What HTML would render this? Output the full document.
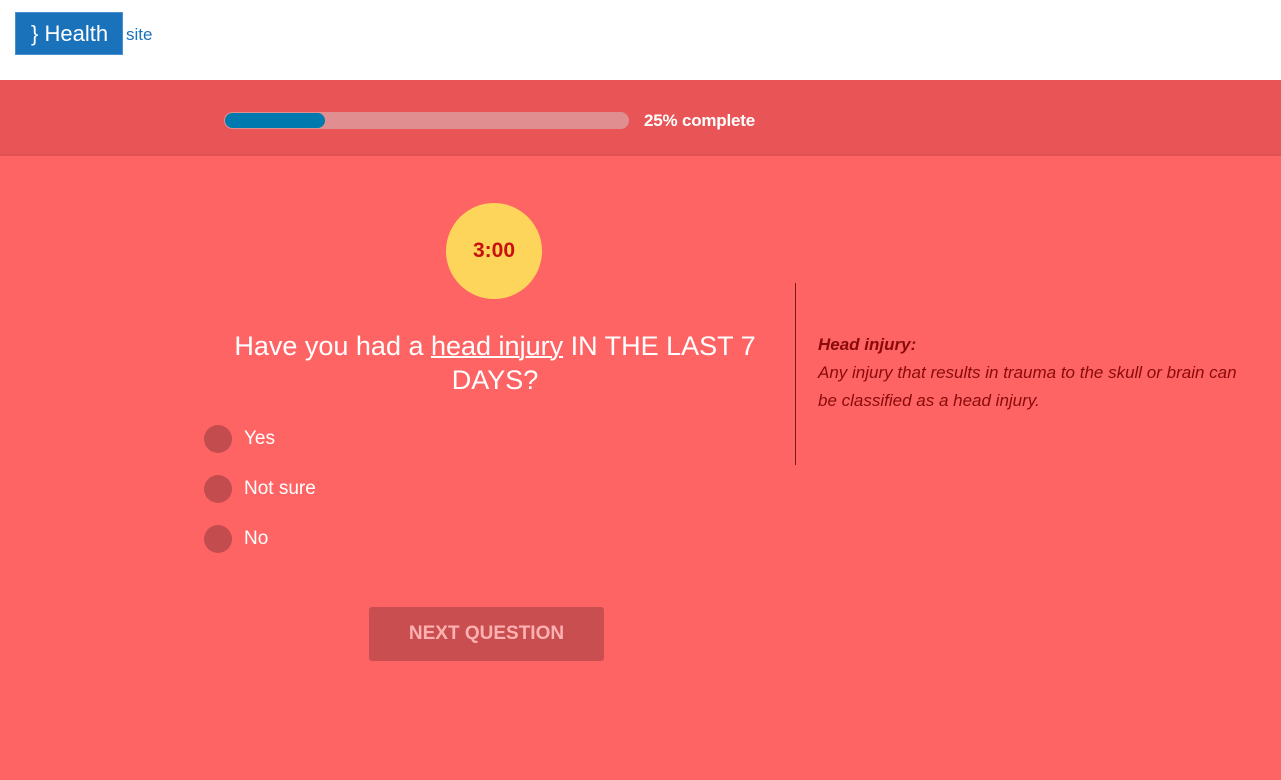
<!DOCTYPE html>
<html><head><meta charset="utf-8"><style>
*{margin:0;padding:0;box-sizing:border-box}
body{width:1281px;height:780px;overflow:hidden;background:#ff6464;font-family:"Liberation Sans",sans-serif;position:relative}
.top{position:absolute;left:0;top:0;width:1281px;height:80px;background:#fff}
.logo{position:absolute;left:15px;top:12px;width:108px;height:43px;background:#1a72bb;border:1px solid #4a90cf;color:#fff;font-size:22px;line-height:41px;padding-left:15px}
.site{position:absolute;left:126px;top:25px;color:#1a72bb;font-size:17px}
.bar{position:absolute;left:0;top:80px;width:1281px;height:76px;background:#e95556;border-bottom:2px solid #e05252}
.track{position:absolute;left:224px;top:112px;width:405px;height:17px;border-radius:9px;background:#e08e8f}
.fill{position:absolute;left:225px;top:113px;width:100px;height:15px;border-radius:8px;background:#0079ae}
.pct{position:absolute;left:644px;top:111px;color:#fff;font-weight:bold;font-size:17px;letter-spacing:-0.2px}
.timer{position:absolute;left:446px;top:203px;width:96px;height:96px;border-radius:50%;background:#fdd55a;color:#c81010;font-weight:bold;font-size:21px;text-align:center;line-height:96px}
.q{position:absolute;left:210px;top:329px;width:570px;text-align:center;color:#fff;font-size:27px;line-height:34px}
.q u{text-decoration-thickness:2px}
.opt{position:absolute;left:204px;color:#fff;font-size:19px;line-height:28px}
.opt i{position:absolute;left:0;top:0;width:28px;height:28px;border-radius:50%;background:#c34c4e}
.opt span{position:absolute;left:40px;top:0;white-space:nowrap}
.btn{position:absolute;left:369px;top:607px;width:235px;height:54px;border-radius:3px;background:#c84e50;color:#ffb0b0;font-weight:bold;font-size:19px;text-align:center;line-height:54px}
.vl{position:absolute;left:795px;top:283px;width:1px;height:182px;background:#7a1a1a}
.def{position:absolute;left:818px;top:331px;width:440px;color:#8a0a0a;font-style:italic;font-size:17px;line-height:28px}
</style></head><body>
<div class="top"></div>
<div class="logo">} Health</div><div class="site">site</div>
<div class="bar"></div>
<div class="track"></div><div class="fill"></div>
<div class="pct">25% complete</div>
<div class="timer">3:00</div>
<div class="q">Have you had a <u>head injury</u> IN THE LAST 7 DAYS?</div>
<div class="opt" style="top:425px"><i></i><span>Yes</span></div>
<div class="opt" style="top:475px"><i></i><span>Not sure</span></div>
<div class="opt" style="top:525px"><i></i><span>No</span></div>
<div class="btn">NEXT QUESTION</div>
<div class="vl"></div>
<div class="def"><b>Head injury:</b><br>Any injury that results in trauma to the skull or brain can be classified as a head injury.</div>
</body></html>
